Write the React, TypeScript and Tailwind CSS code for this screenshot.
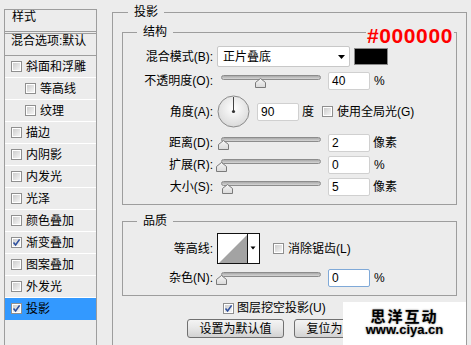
import type { ReactNode } from "react";

const styleRows: { label: string; checked?: boolean; indent?: boolean; active?: boolean }[] = [
  { label: "斜面和浮雕" },
  { label: "等高线", indent: true },
  { label: "纹理", indent: true },
  { label: "描边" },
  { label: "内阴影" },
  { label: "内发光" },
  { label: "光泽" },
  { label: "颜色叠加" },
  { label: "渐变叠加", checked: true },
  { label: "图案叠加" },
  { label: "外发光" },
  { label: "投影", checked: true, active: true },
];

function Check({ checked }: { checked?: boolean }) {
  return (
    <span className="flex h-[11px] w-[11px] shrink-0 border border-[#8f8f8f] bg-white p-px">
      <span className="relative flex flex-1 items-center justify-center bg-gradient-to-br from-[#cdcdcd] to-[#f5f5f5]">
        {checked && (
          <svg width="9" height="9" viewBox="0 0 9 9" className="absolute left-[-1px] top-[-1px]">
            <path d="M1.5 4.5 L3.6 7 L7.6 1.4" fill="none" stroke="#2d4f9e" strokeWidth="1.6" />
          </svg>
        )}
      </span>
    </span>
  );
}

function Label({ children }: { children: ReactNode }) {
  return <div className="w-[90px] shrink-0 text-right">{children}</div>;
}

function Slider({ thumb }: { thumb: string }) {
  return (
    <div className="relative ml-[8px] h-[18px] w-[100px] shrink-0">
      <div className="absolute left-0 right-0 top-[3px] h-[5px] rounded-full border border-[#8c8c8c] bg-gradient-to-b from-[#a9a9a9] to-[#d6d6d6]" />
      <svg width="11" height="10" viewBox="0 0 11 10" className={"absolute top-[6px] " + thumb}>
        <defs>
          <linearGradient id="th" x1="0" y1="0" x2="0" y2="1">
            <stop offset="0" stopColor="#f7f7f7" />
            <stop offset="1" stopColor="#d9d9d9" />
          </linearGradient>
        </defs>
        <path d="M5.5 0.5 L10.5 4.5 L10.5 9.5 L0.5 9.5 L0.5 4.5 Z" fill="url(#th)" stroke="#7a7a7a" />
      </svg>
    </div>
  );
}

function Field({ value, focus }: { value: string; focus?: boolean }) {
  return (
    <div
      className={
        "ml-[7px] flex h-[18px] w-[42px] shrink-0 items-center rounded-[2px] border bg-white pl-[3px] " +
        (focus ? "border-[#7fa9d8]" : "border-[#d0d0d0]")
      }
    >
      {value}
    </div>
  );
}

function Button({ children, className }: { children: ReactNode; className?: string }) {
  return (
    <div
      className={
        "flex h-[19px] w-[97px] shrink-0 items-center justify-center rounded-[3px] border border-[#707070] bg-gradient-to-b from-[#f4f4f4] via-[#e6e6e6] to-[#d2d2d2] " +
        (className ?? "")
      }
    >
      {children}
    </div>
  );
}

export default function App() {
  return (
    <div className="relative flex h-[345px] w-[471px] overflow-hidden bg-[#ececec] font-['Liberation_Sans','Noto_Sans_CJK_SC',sans-serif] text-[12px] leading-[16px] text-black">
      {/* styles list */}
      <div className="ml-[4px] mt-[9px] flex w-[93px] shrink-0 flex-col border-x border-t border-[#9d9d9d]">
        <div className="h-[22px] border-b border-[#9d9d9d] pl-[7px] leading-[14px]">样式</div>
        <div className="mt-px h-[23px] border-y border-[#9d9d9d] pl-[6px] leading-[14px]">混合选项:默认</div>
        {styleRows.map((r) => (
          <div
            key={r.label}
            className={
              "flex h-[22px] shrink-0 items-center border-b " +
              (r.indent ? "pl-[20px] " : "pl-[6px] ") +
              (r.active ? "border-[#3399ff] bg-[#3399ff]" : "border-white")
            }
          >
            <Check checked={r.checked} />
            <span className="ml-[4px]">{r.label}</span>
          </div>
        ))}
      </div>

      {/* drop shadow panel */}
      <fieldset className="ml-[15px] mt-[4px] h-[400px] w-[355px] shrink-0 border border-[#9d9d9d]">
        <legend className="ml-[15px] px-[6px] leading-[17px]">投影</legend>

        <fieldset className="ml-[9px] mt-[3px] w-[335px] border border-[#9d9d9d]">
          <legend className="ml-[14px] px-[6px] leading-[17px]">结构</legend>
          <div className="flex flex-col pb-[8px] pt-[5px]">
            <div className="flex h-[21px] items-center">
              <Label>混合模式(B):</Label>
              <div className="ml-[4px] flex h-[21px] w-[133px] items-center justify-between rounded-[2px] border border-[#c8c8c8] bg-white pl-[5px] pr-[4px]">
                <span>正片叠底</span>
                <svg width="7" height="4" viewBox="0 0 7 4">
                  <path d="M0 0 H7 L3.5 4 Z" fill="#000" />
                </svg>
              </div>
              <div className="ml-[4px] h-[17px] w-[34px] border border-[#8a8a8a] bg-black" />
            </div>

            <div className="mt-[5px] flex h-[18px] items-center">
              <Label>不透明度(O):</Label>
              <Slider thumb="left-[34px]" />
              <Field value="40" />
              <span className="ml-[4px]">%</span>
            </div>

            <div className="mt-[5px] flex h-[33px] items-center">
              <Label>角度(A):</Label>
              <svg width="33" height="33" viewBox="0 0 33 33" className="ml-[4px] shrink-0">
                <defs>
                  <radialGradient id="dial" cx="0.5" cy="0.4" r="0.6">
                    <stop offset="0" stopColor="#ffffff" />
                    <stop offset="1" stopColor="#dadada" />
                  </radialGradient>
                </defs>
                <circle cx="16.5" cy="16.5" r="15.5" fill="url(#dial)" stroke="#8a8a8a" />
                <line x1="16.5" y1="2" x2="16.5" y2="16" stroke="#444" strokeWidth="1" />
                <circle cx="16.5" cy="16.5" r="1.6" fill="#333" />
              </svg>
              <Field value="90" />
              <span className="ml-[3px]">度</span>
              <span className="ml-[8px]">
                <Check />
              </span>
              <span className="ml-[4px]">使用全局光(G)</span>
            </div>

            <div className="mt-[6px] flex h-[18px] items-center">
              <Label>距离(D):</Label>
              <Slider thumb="left-[-3px]" />
              <Field value="2" />
              <span className="ml-[3px]">像素</span>
            </div>

            <div className="mt-[4px] flex h-[18px] items-center">
              <Label>扩展(R):</Label>
              <Slider thumb="left-[-5px]" />
              <Field value="0" />
              <span className="ml-[4px]">%</span>
            </div>

            <div className="mt-[4px] flex h-[18px] items-center">
              <Label>大小(S):</Label>
              <Slider thumb="left-[1px]" />
              <Field value="5" />
              <span className="ml-[3px]">像素</span>
            </div>
          </div>
        </fieldset>

        <fieldset className="ml-[9px] mt-[8px] w-[335px] border border-[#9d9d9d]">
          <legend className="ml-[14px] px-[6px] leading-[17px]">品质</legend>
          <div className="flex flex-col pb-[8px] pt-[3px]">
            <div className="flex h-[31px] items-center">
              <Label>等高线:</Label>
              <svg width="43" height="31" viewBox="0 0 43 31" className="ml-[4px] shrink-0">
                <rect x="0.5" y="0.5" width="42" height="30" fill="#fff" stroke="#111" />
                <path d="M2 30 L30 2 L30 30 Z" fill="#a3a3a3" />
                <line x1="30.5" y1="0.5" x2="30.5" y2="30.5" stroke="#111" />
                <path d="M33.5 13.5 H38.5 L36 16.5 Z" fill="#000" />
              </svg>
              <span className="ml-[13px]">
                <Check />
              </span>
              <span className="ml-[4px]">消除锯齿(L)</span>
            </div>
            <div className="mt-[5px] flex h-[18px] items-center">
              <Label>杂色(N):</Label>
              <Slider thumb="left-[-5px]" />
              <Field value="0" focus />
              <span className="ml-[4px]">%</span>
            </div>
          </div>
        </fieldset>

        <div className="mt-[5px] flex h-[14px] items-center pl-[110px]">
          <Check checked />
          <span className="ml-[3px]">图层挖空投影(U)</span>
        </div>

        <div className="mt-[4px] flex pl-[74px]">
          <Button>设置为默认值</Button>
          <Button className="ml-[10px]">复位为默认值</Button>
        </div>
      </fieldset>

      {/* colour annotation */}
      <div className="absolute left-[366px] top-[25px] bg-[#ececec] px-px font-['Liberation_Sans',sans-serif] text-[21px] font-bold leading-[21px] tracking-[0.6px] text-[#ff0000]">
        #000000
      </div>

      {/* watermark */}
      <div className="absolute left-[343px] top-[302px] flex h-[50px] w-[123px] flex-col items-center bg-white pt-[7px]">
        <span className="text-[15px] font-bold leading-[15px] tracking-[2px] [text-shadow:0_0_2px_#777]">思洋互动</span>
        <span className="font-['Liberation_Sans',sans-serif] text-[13px] font-bold leading-[11px] [text-shadow:0_0_2px_#777]">
          www.ciya.cn
        </span>
      </div>
    </div>
  );
}
